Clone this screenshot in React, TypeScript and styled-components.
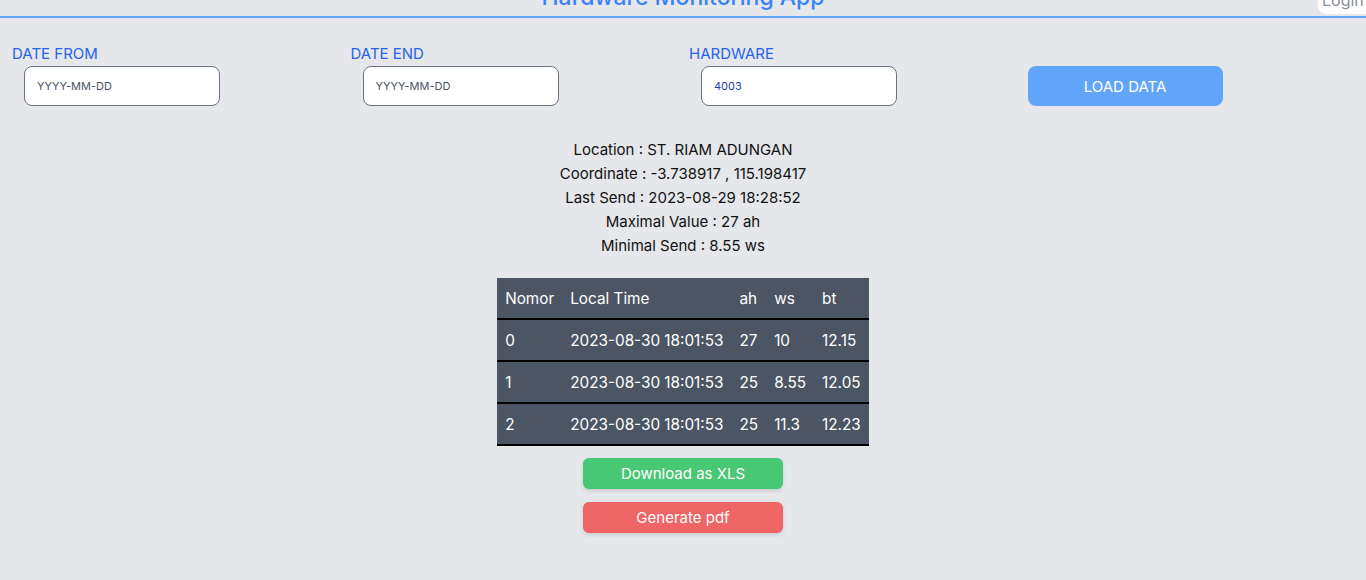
import styled, { createGlobalStyle } from 'styled-components';

const GlobalStyle = createGlobalStyle`
    html, body {
        margin: 0;
        padding: 0;
        background: #e5e7eb;
        font-family: Inter, "Open Sans", sans-serif;
        overflow: hidden;
    }
`;

const Page = styled.div`
    min-height: 580px;
    background: #e5e7eb;
`;

const Header = styled.header`
    display: flex;
    justify-content: center;
    align-items: flex-end;
    height: 40px;
    margin-top: -24px;
    border-bottom: 2px solid #60a5fa;
    position: relative;
`;

const Title = styled.h1`
    margin: 0 0 5px;
    font-size: 23px;
    font-weight: 500;
    color: #3b82f6;
`;

// sits over the header, only its lower edge is in view
const LoginButton = styled.button`
    position: absolute;
    right: 0;
    top: 0;
    height: 38px;
    width: 48px;
    padding: 14px 0 0 4px;
    display: flex;
    align-items: flex-start;
    background: #ffffff;
    border: none;
    border-radius: 0 0 0 8px;
    color: #8a8f98;
    font-family: inherit;
    font-size: 16px;
`;

const FilterRow = styled.div`
    display: grid;
    grid-template-columns: repeat(4, 1fr);
    padding: 27px 0 0 12px;
`;

const Field = styled.div`
    display: flex;
    flex-direction: column;
    gap: 3px;
`;

const Label = styled.label`
    font-size: 15px;
    color: #2563eb;
    line-height: 18px;
`;

const Input = styled.input`
    margin-left: 12px;
    width: 196px;
    height: 40px;
    box-sizing: border-box;
    border: 1px solid #6b7280;
    border-radius: 8px;
    background: #ffffff;
    padding: 0 12px;
    font-family: inherit;
    font-size: 11px;
    color: #1e40af;
    outline: none;

    &::placeholder {
        color: #4b5563;
    }
`;

const LoadButton = styled.button`
    margin-top: 21px;
    width: 195px;
    height: 40px;
    border: none;
    border-radius: 8px;
    background: #60a5fa;
    color: #ffffff;
    font-family: inherit;
    font-size: 15px;
`;

const Info = styled.div`
    margin-top: 32px;
    display: flex;
    flex-direction: column;
    align-items: center;
    font-size: 15px;
    line-height: 24px;
    color: #111111;
`;

const TableWrap = styled.div`
    display: flex;
    flex-direction: column;
    align-items: center;
    margin-top: 20px;
`;

const Table = styled.table`
    border-collapse: collapse;
    background: #4b5563;
    color: #ffffff;
    font-size: 15.3px;
`;

const HeadCell = styled.th`
    text-align: left;
    font-weight: 400;
    height: 40px;
    padding: 0 8px;
    border-bottom: 2px solid #000000;
`;

const Cell = styled.td`
    height: 40px;
    padding: 0 8px;
    border-bottom: 2px solid #000000;
`;

const Actions = styled.div`
    margin-top: 12px;
    display: flex;
    flex-direction: column;
    gap: 13px;
`;

const ActionButton = styled.button<{ $color: string }>`
    width: 200px;
    height: 31px;
    border: none;
    border-radius: 6px;
    background: ${(p) => p.$color};
    color: #ffffff;
    font-family: inherit;
    font-size: 15px;
    box-shadow: 0 2px 4px rgba(0, 0, 0, 0.12);
`;

const rows = [
    { no: 0, time: '2023-08-30 18:01:53', ah: '27', ws: '10', bt: '12.15' },
    { no: 1, time: '2023-08-30 18:01:53', ah: '25', ws: '8.55', bt: '12.05' },
    { no: 2, time: '2023-08-30 18:01:53', ah: '25', ws: '11.3', bt: '12.23' },
];

const App = (): JSX.Element => {
    return (
        <Page>
            <GlobalStyle />
            <Header>
                <Title>Hardware Monitoring App</Title>
                <LoginButton type='button'>Login</LoginButton>
            </Header>
            <FilterRow>
                <Field>
                    <Label>DATE FROM</Label>
                    <Input placeholder='YYYY-MM-DD' />
                </Field>
                <Field>
                    <Label>DATE END</Label>
                    <Input placeholder='YYYY-MM-DD' />
                </Field>
                <Field>
                    <Label>HARDWARE</Label>
                    <Input defaultValue='4003' />
                </Field>
                <div>
                    <LoadButton type='button'>LOAD DATA</LoadButton>
                </div>
            </FilterRow>
            <Info>
                <span>Location : ST. RIAM ADUNGAN</span>
                <span>Coordinate : -3.738917 , 115.198417</span>
                <span>Last Send : 2023-08-29 18:28:52</span>
                <span>Maximal Value : 27 ah</span>
                <span>Minimal Send : 8.55 ws</span>
            </Info>
            <TableWrap>
                <Table>
                    <thead>
                        <tr>
                            <HeadCell>Nomor</HeadCell>
                            <HeadCell>Local Time</HeadCell>
                            <HeadCell>ah</HeadCell>
                            <HeadCell>ws</HeadCell>
                            <HeadCell>bt</HeadCell>
                        </tr>
                    </thead>
                    <tbody>
                        {rows.map((r) => (
                            <tr key={r.no}>
                                <Cell>{r.no}</Cell>
                                <Cell>{r.time}</Cell>
                                <Cell>{r.ah}</Cell>
                                <Cell>{r.ws}</Cell>
                                <Cell>{r.bt}</Cell>
                            </tr>
                        ))}
                    </tbody>
                </Table>
                <Actions>
                    <ActionButton type='button' $color='#48c774'>Download as XLS</ActionButton>
                    <ActionButton type='button' $color='#ef6464'>Generate pdf</ActionButton>
                </Actions>
            </TableWrap>
        </Page>
    );
}

export default App;
